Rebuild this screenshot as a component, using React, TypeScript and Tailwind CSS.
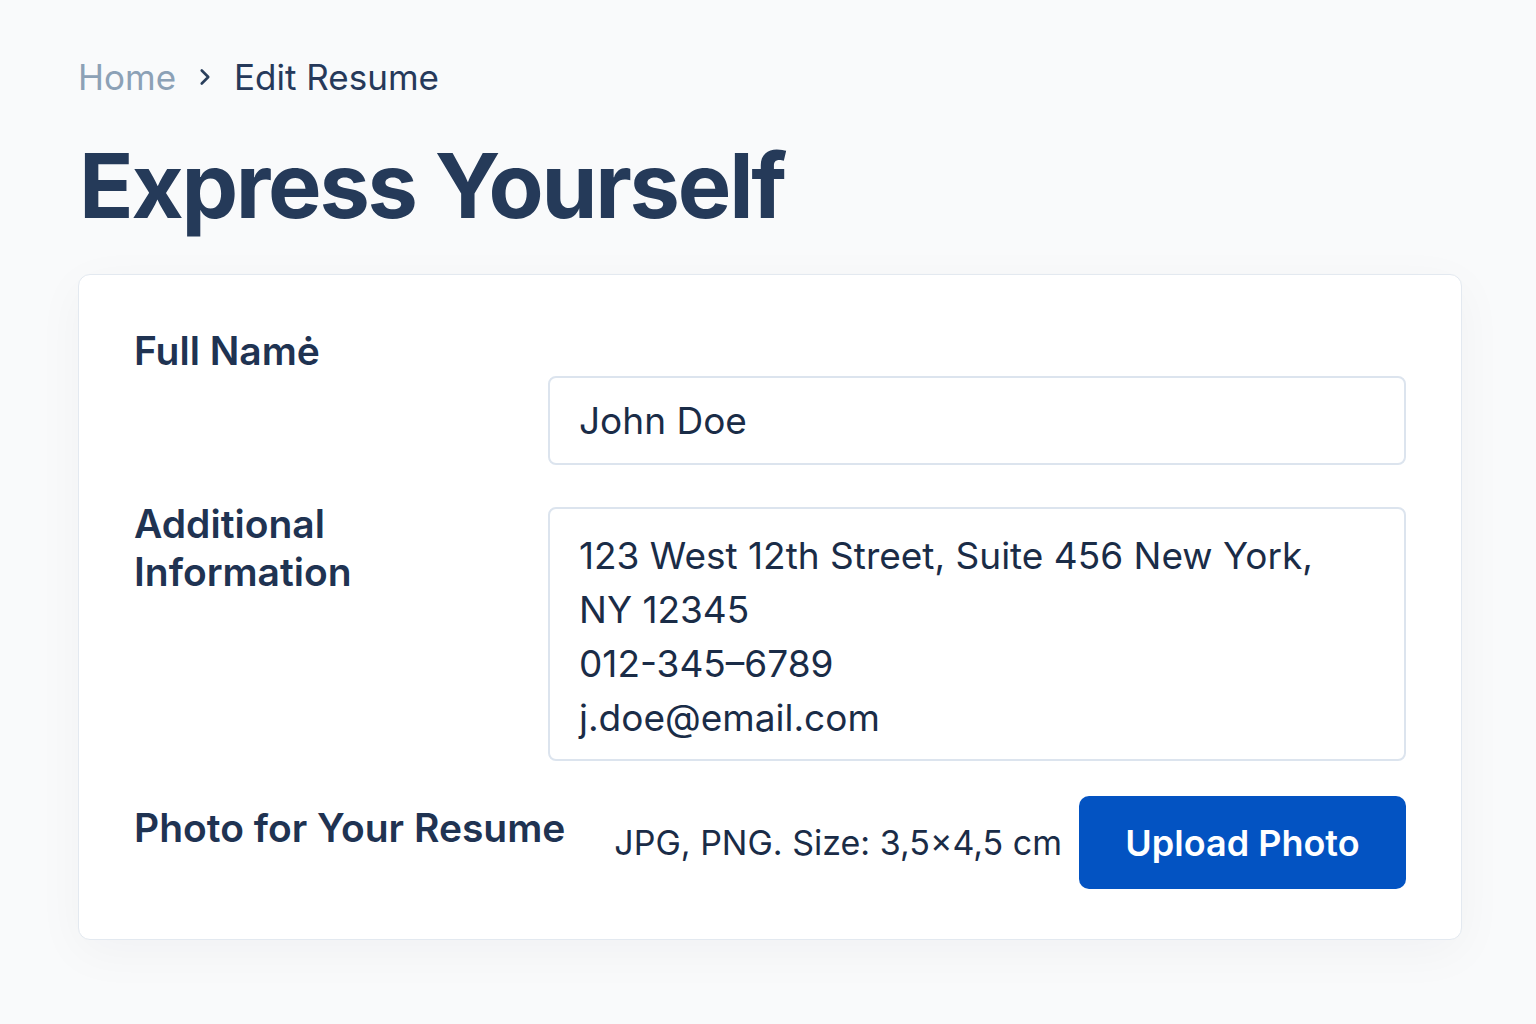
import React from 'react';
import { ChevronRight } from 'lucide-react';

const App: React.FC = () => {
  return (
    <div
      className="min-h-screen w-full bg-[#f9fafb] text-[#1f3352]"
      style={{ fontFamily: 'Inter, "Noto Sans", sans-serif' }}
    >
      <div className="pl-[78px] pr-[74px] pt-[53px] pb-[84px]">
        {/* Breadcrumb */}
        <nav className="flex items-center text-[35px] leading-[48px]">
          <span className="text-[#8ca1b6]">Home</span>
          <ChevronRight size={26} strokeWidth={2.4} className="mx-[16px] text-[#2a3f5c]" />
          <span className="text-[#26395a]">Edit Resume</span>
        </nav>

        {/* Title */}
        <h1 className="mt-[30px] ml-[1px] text-[90px] leading-[110px] font-bold tracking-tight text-[#253a59]">
          Express Yourself
        </h1>

        {/* Form card */}
        <div className="mt-[33px] rounded-[12px] border border-[#e3e9f0] bg-white pl-[55px] pr-[55px] pt-[52px] pb-[50px] shadow-[0_12px_50px_rgba(15,23,42,0.04)]">
          <div className="grid grid-cols-[414px_1fr]">
            <label className="text-[39px] leading-[48px] font-semibold text-[#1f3352]">
              Full Namė
            </label>
            <div className="mt-[49px] flex h-[89px] items-center rounded-[8px] border-2 border-[#dce4ee] px-[29px] text-[37px] text-[#1a2c47]">
              John Doe
            </div>

            <label className="mt-[35px] text-[39px] leading-[48px] font-semibold text-[#1f3352]">
              Additional
              <br />
              Information
            </label>
            <div className="mt-[42px] rounded-[8px] border-2 border-[#dce4ee] px-[29px] pt-[20px] pb-[14px] text-[37px] leading-[54px] text-[#1a2c47]">
              <div>123 West 12th Street, Suite 456 New York,</div>
              <div>NY 12345</div>
              <div>012-345–6789</div>
              <div>j.doe@email.com</div>
            </div>
          </div>

          <div className="mt-[35px] flex items-center">
            <span className="-mt-[29px] text-[39px] leading-[48px] font-semibold text-[#1f3352]">
              Photo for Your Resume
            </span>
            <span className="ml-auto mr-[17px] text-[34px] text-[#1a2c47]">
              JPG, PNG. Size: 3,5×4,5 cm
            </span>
            <button className="h-[93px] w-[327px] rounded-[10px] bg-[#0353c2] text-[36px] font-semibold text-white">
              Upload Photo
            </button>
          </div>
        </div>
      </div>
    </div>
  );
};

export default App;
